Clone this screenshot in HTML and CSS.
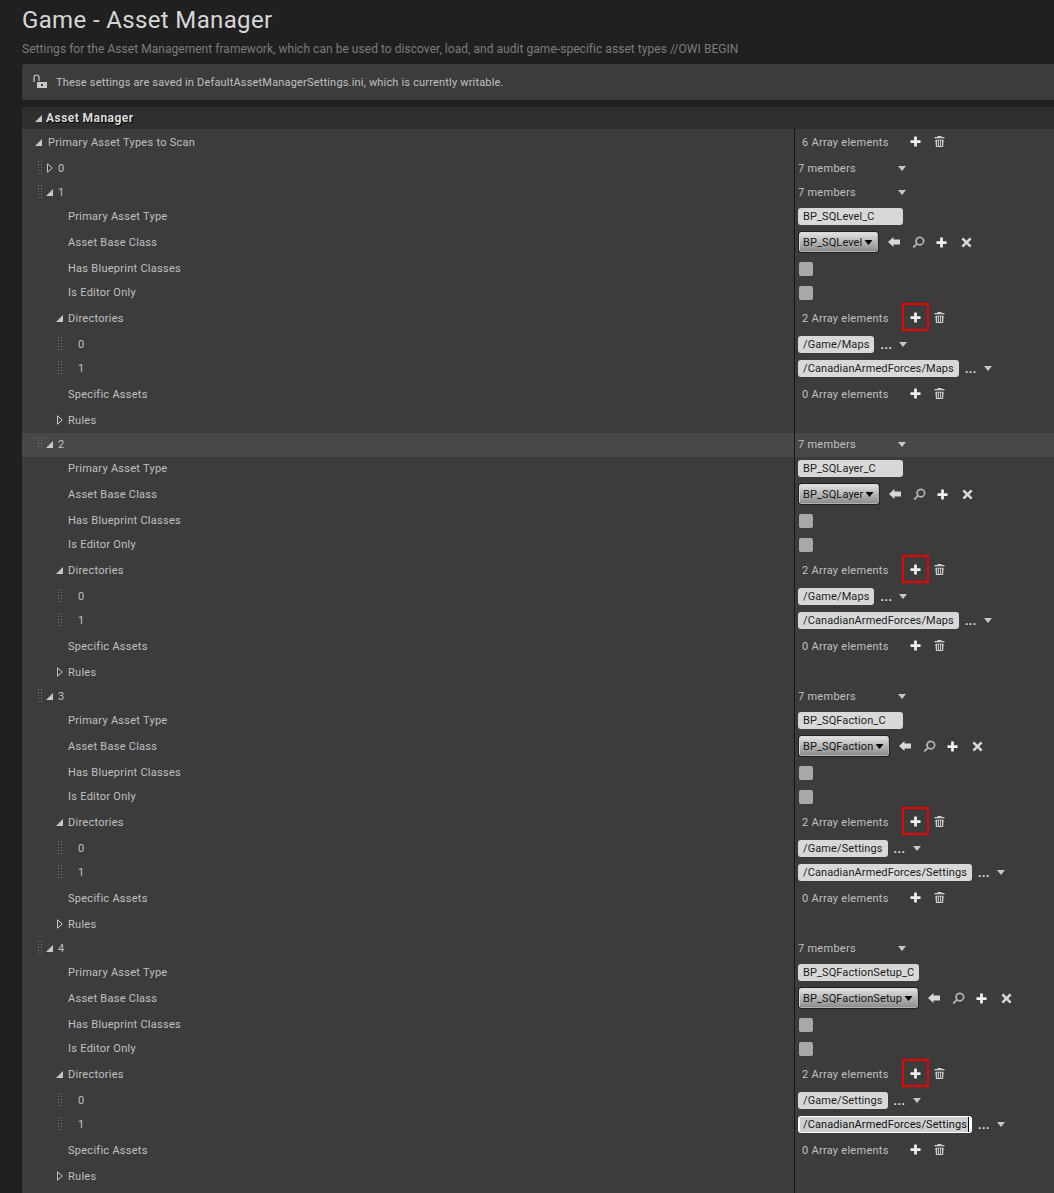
FILE: index.html
```html
<!DOCTYPE html>
<html lang="en">
<head>
    <meta charset="UTF-8">
    <title>Game - Asset Manager</title>
    <link rel="stylesheet" href="styles.css">
</head>
<body>
    <svg class="defs" width="0" height="0">
        <symbol id="plus" viewBox="0 0 12 12"><path d="M4.5 0.5h3v4h4v3h-4v4h-3v-4h-4v-3h4z"/></symbol>
        <symbol id="trash" viewBox="0 0 12 13"><path d="M4 0.5h4l0.5 1H11.5v1.5H0.5V1.5H3.5zM1.5 4.5h9l-0.6 8H2.1zM3.4 5.5v6h1.1v-6zM5.5 5.5v6h1.1v-6zM7.6 5.5v6h1.1v-6z" fill-rule="evenodd"/></symbol>
        <symbol id="back" viewBox="0 0 12 12"><path d="M0 6L5.5 1V3.5H12V8.5H5.5V11z"/></symbol>
        <symbol id="search" viewBox="0 0 12 12"><path d="M7.3 0.5a4.2 4.2 0 1 1-2.6 7.5L1.8 11.2 0.6 10 3.6 6.9A4.2 4.2 0 0 1 7.3 0.5zM7.3 2a2.700 2.700 0 1 0 0 5.400 2.700 2.700 0 0 0 0-5.400z" fill-rule="evenodd"/></symbol>
        <symbol id="cross" viewBox="0 0 12 12"><path d="M2.5 0.5L6 4l3.500-3.500 2 2L8 6l3.500 3.500-2 2L6 8l-3.500 3.500-2-2L4 6 0.500 2.500z"/></symbol>
        <symbol id="caret" viewBox="0 0 8 5"><path d="M0 0h8L4 5z"/></symbol>
        <symbol id="open" viewBox="0 0 7 7"><path d="M7 0V7H0z"/></symbol>
        <symbol id="closed" viewBox="0 0 6 10"><path d="M0.500 0.800L5.300 5 0.500 9.200z" fill="none" stroke="currentColor"/></symbol>
        <symbol id="lock" viewBox="0 0 14 16"><path d="M1 8V3.500a2.500 2.500 0 0 1 5 0V7" fill="none" stroke="currentColor" stroke-width="1.200"/><path d="M4 8h10v6H4z"/><path d="M8 10h2v2H8z" fill="#3c3c3c"/></symbol>
    </svg>

    <div class="page">
        <h1 class="title">Game - Asset Manager</h1>
        <p class="subtitle">Settings for the Asset Management framework, which can be used to discover, load, and audit game-specific asset types //OWI BEGIN</p>

        <div class="notice">
            <svg class="lock-icon"><use href="#lock"/></svg>
            <span>These settings are saved in DefaultAssetManagerSettings.ini, which is currently writable.</span>
        </div>

        <div class="section-header">
            <svg class="tri tri-head"><use href="#open"/></svg>
            <span>Asset Manager</span>
        </div>

        <div class="table">
            <div class="row row-tall">
                <div class="name"><svg class="tri tri-top"><use href="#open"/></svg>Primary Asset Types to Scan</div>
                <div class="value"><span class="count">6 Array elements</span><span class="icon-btn"><svg class="ico"><use href="#plus"/></svg></span><svg class="ico-trash"><use href="#trash"/></svg></div>
            </div>
            <div class="row">
                <div class="name lvl1"><span class="grip"></span><svg class="tri-closed"><use href="#closed"/></svg>0</div>
                <div class="value"><span class="members">7 members</span><svg class="caret"><use href="#caret"/></svg></div>
            </div>

            <!-- 1 -->
            <div class="row">
                <div class="name lvl1"><span class="grip"></span><svg class="tri"><use href="#open"/></svg>1</div>
                <div class="value"><span class="members">7 members</span><svg class="caret"><use href="#caret"/></svg></div>
            </div>
            <div class="row">
                <div class="name lvl2">Primary Asset Type</div>
                <div class="value"><span class="field field-type">BP_SQLevel_C</span></div>
            </div>
            <div class="row row-tall">
                <div class="name lvl2">Asset Base Class</div>
                <div class="value"><span class="combo">BP_SQLevel<svg class="combo-caret"><use href="#caret"/></svg></span><svg class="ico-back"><use href="#back"/></svg><svg class="ico-search"><use href="#search"/></svg><svg class="ico-plus"><use href="#plus"/></svg><svg class="ico-cross"><use href="#cross"/></svg></div>
            </div>
            <div class="row">
                <div class="name lvl2">Has Blueprint Classes</div>
                <div class="value"><span class="check"></span></div>
            </div>
            <div class="row">
                <div class="name lvl2">Is Editor Only</div>
                <div class="value"><span class="check"></span></div>
            </div>
            <div class="row row-tall">
                <div class="name lvl2"><svg class="tri tri-in"><use href="#open"/></svg>Directories</div>
                <div class="value"><span class="count">2 Array elements</span><span class="icon-btn marked"><svg class="ico"><use href="#plus"/></svg></span><svg class="ico-trash"><use href="#trash"/></svg></div>
            </div>
            <div class="row">
                <div class="name lvl3"><span class="grip"></span>0</div>
                <div class="value"><span class="field">/Game/Maps</span><span class="dots">...</span><svg class="caret caret-path"><use href="#caret"/></svg></div>
            </div>
            <div class="row">
                <div class="name lvl3"><span class="grip"></span>1</div>
                <div class="value"><span class="field">/CanadianArmedForces/Maps</span><span class="dots">...</span><svg class="caret caret-path"><use href="#caret"/></svg></div>
            </div>
            <div class="row row-tall">
                <div class="name lvl2">Specific Assets</div>
                <div class="value"><span class="count">0 Array elements</span><span class="icon-btn"><svg class="ico"><use href="#plus"/></svg></span><svg class="ico-trash"><use href="#trash"/></svg></div>
            </div>
            <div class="row">
                <div class="name lvl2"><svg class="tri-closed tri-in"><use href="#closed"/></svg>Rules</div>
                <div class="value"></div>
            </div>

            <!-- 2 -->
            <div class="row row-hover">
                <div class="name lvl1"><span class="grip"></span><svg class="tri"><use href="#open"/></svg>2</div>
                <div class="value"><span class="members">7 members</span><svg class="caret"><use href="#caret"/></svg></div>
            </div>
            <div class="row">
                <div class="name lvl2">Primary Asset Type</div>
                <div class="value"><span class="field field-type">BP_SQLayer_C</span></div>
            </div>
            <div class="row row-tall">
                <div class="name lvl2">Asset Base Class</div>
                <div class="value"><span class="combo">BP_SQLayer<svg class="combo-caret"><use href="#caret"/></svg></span><svg class="ico-back"><use href="#back"/></svg><svg class="ico-search"><use href="#search"/></svg><svg class="ico-plus"><use href="#plus"/></svg><svg class="ico-cross"><use href="#cross"/></svg></div>
            </div>
            <div class="row">
                <div class="name lvl2">Has Blueprint Classes</div>
                <div class="value"><span class="check"></span></div>
            </div>
            <div class="row">
                <div class="name lvl2">Is Editor Only</div>
                <div class="value"><span class="check"></span></div>
            </div>
            <div class="row row-tall">
                <div class="name lvl2"><svg class="tri tri-in"><use href="#open"/></svg>Directories</div>
                <div class="value"><span class="count">2 Array elements</span><span class="icon-btn marked"><svg class="ico"><use href="#plus"/></svg></span><svg class="ico-trash"><use href="#trash"/></svg></div>
            </div>
            <div class="row">
                <div class="name lvl3"><span class="grip"></span>0</div>
                <div class="value"><span class="field">/Game/Maps</span><span class="dots">...</span><svg class="caret caret-path"><use href="#caret"/></svg></div>
            </div>
            <div class="row">
                <div class="name lvl3"><span class="grip"></span>1</div>
                <div class="value"><span class="field">/CanadianArmedForces/Maps</span><span class="dots">...</span><svg class="caret caret-path"><use href="#caret"/></svg></div>
            </div>
            <div class="row row-tall">
                <div class="name lvl2">Specific Assets</div>
                <div class="value"><span class="count">0 Array elements</span><span class="icon-btn"><svg class="ico"><use href="#plus"/></svg></span><svg class="ico-trash"><use href="#trash"/></svg></div>
            </div>
            <div class="row">
                <div class="name lvl2"><svg class="tri-closed tri-in"><use href="#closed"/></svg>Rules</div>
                <div class="value"></div>
            </div>

            <!-- 3 -->
            <div class="row">
                <div class="name lvl1"><span class="grip"></span><svg class="tri"><use href="#open"/></svg>3</div>
                <div class="value"><span class="members">7 members</span><svg class="caret"><use href="#caret"/></svg></div>
            </div>
            <div class="row">
                <div class="name lvl2">Primary Asset Type</div>
                <div class="value"><span class="field field-type">BP_SQFaction_C</span></div>
            </div>
            <div class="row row-tall">
                <div class="name lvl2">Asset Base Class</div>
                <div class="value"><span class="combo">BP_SQFaction<svg class="combo-caret"><use href="#caret"/></svg></span><svg class="ico-back"><use href="#back"/></svg><svg class="ico-search"><use href="#search"/></svg><svg class="ico-plus"><use href="#plus"/></svg><svg class="ico-cross"><use href="#cross"/></svg></div>
            </div>
            <div class="row">
                <div class="name lvl2">Has Blueprint Classes</div>
                <div class="value"><span class="check"></span></div>
            </div>
            <div class="row">
                <div class="name lvl2">Is Editor Only</div>
                <div class="value"><span class="check"></span></div>
            </div>
            <div class="row row-tall">
                <div class="name lvl2"><svg class="tri tri-in"><use href="#open"/></svg>Directories</div>
                <div class="value"><span class="count">2 Array elements</span><span class="icon-btn marked"><svg class="ico"><use href="#plus"/></svg></span><svg class="ico-trash"><use href="#trash"/></svg></div>
            </div>
            <div class="row">
                <div class="name lvl3"><span class="grip"></span>0</div>
                <div class="value"><span class="field">/Game/Settings</span><span class="dots">...</span><svg class="caret caret-path"><use href="#caret"/></svg></div>
            </div>
            <div class="row">
                <div class="name lvl3"><span class="grip"></span>1</div>
                <div class="value"><span class="field">/CanadianArmedForces/Settings</span><span class="dots">...</span><svg class="caret caret-path"><use href="#caret"/></svg></div>
            </div>
            <div class="row row-tall">
                <div class="name lvl2">Specific Assets</div>
                <div class="value"><span class="count">0 Array elements</span><span class="icon-btn"><svg class="ico"><use href="#plus"/></svg></span><svg class="ico-trash"><use href="#trash"/></svg></div>
            </div>
            <div class="row">
                <div class="name lvl2"><svg class="tri-closed tri-in"><use href="#closed"/></svg>Rules</div>
                <div class="value"></div>
            </div>

            <!-- 4 -->
            <div class="row">
                <div class="name lvl1"><span class="grip"></span><svg class="tri"><use href="#open"/></svg>4</div>
                <div class="value"><span class="members">7 members</span><svg class="caret"><use href="#caret"/></svg></div>
            </div>
            <div class="row">
                <div class="name lvl2">Primary Asset Type</div>
                <div class="value"><span class="field field-wide">BP_SQFactionSetup_C</span></div>
            </div>
            <div class="row row-tall">
                <div class="name lvl2">Asset Base Class</div>
                <div class="value"><span class="combo">BP_SQFactionSetup<svg class="combo-caret"><use href="#caret"/></svg></span><svg class="ico-back"><use href="#back"/></svg><svg class="ico-search"><use href="#search"/></svg><svg class="ico-plus"><use href="#plus"/></svg><svg class="ico-cross"><use href="#cross"/></svg></div>
            </div>
            <div class="row">
                <div class="name lvl2">Has Blueprint Classes</div>
                <div class="value"><span class="check"></span></div>
            </div>
            <div class="row">
                <div class="name lvl2">Is Editor Only</div>
                <div class="value"><span class="check"></span></div>
            </div>
            <div class="row row-tall">
                <div class="name lvl2"><svg class="tri tri-in"><use href="#open"/></svg>Directories</div>
                <div class="value"><span class="count">2 Array elements</span><span class="icon-btn marked"><svg class="ico"><use href="#plus"/></svg></span><svg class="ico-trash"><use href="#trash"/></svg></div>
            </div>
            <div class="row">
                <div class="name lvl3"><span class="grip"></span>0</div>
                <div class="value"><span class="field">/Game/Settings</span><span class="dots">...</span><svg class="caret caret-path"><use href="#caret"/></svg></div>
            </div>
            <div class="row">
                <div class="name lvl3"><span class="grip"></span>1</div>
                <div class="value"><span class="field field-focus"><span class="selected">/CanadianArmedForces/Settings</span></span><span class="dots">...</span><svg class="caret caret-path"><use href="#caret"/></svg></div>
            </div>
            <div class="row row-tall">
                <div class="name lvl2">Specific Assets</div>
                <div class="value"><span class="count">0 Array elements</span><span class="icon-btn"><svg class="ico"><use href="#plus"/></svg></span><svg class="ico-trash"><use href="#trash"/></svg></div>
            </div>
            <div class="row">
                <div class="name lvl2"><svg class="tri-closed tri-in"><use href="#closed"/></svg>Rules</div>
                <div class="value"></div>
            </div>
            <div class="row">
                <div class="name"></div>
                <div class="value"></div>
            </div>
        </div>
    </div>
</body>
</html>
```

FILE: styles.css
```css
html, body {
    height: 100%;
    overflow: hidden;
}
body {
    margin: 0;
    background: #202020;
    color: #c0c0c0;
    font-family: Roboto, "Liberation Sans", sans-serif;
    font-size: 11px;
    letter-spacing: 0.27px;
}
.defs {
    display: block;
    height: 0;
}
.page {
    padding-left: 22px;
}
.title {
    margin: 0;
    padding-top: 5px;
    height: 33px;
    box-sizing: content-box;
    font-size: 24px;
    line-height: 31px;
    font-weight: 400;
    letter-spacing: 0.36px;
    color: #d6d6d6;
}
.subtitle {
    margin: 0;
    height: 26px;
    font-size: 12px;
    line-height: 22px;
    letter-spacing: 0.04px;
    color: #7c7c7c;
    white-space: nowrap;
    padding-top: 0;
}
.notice {
    display: flex;
    align-items: center;
    height: 36px;
    background: #3c3c3c;
    border-radius: 3px 0 0 3px;
    color: #c0c0c0;
    letter-spacing: 0.18px;
    padding-left: 11px;
}
.lock-icon {
    width: 14px;
    height: 16px;
    margin-right: 9px;
    fill: #c8c8c8;
    color: #c8c8c8;
}
.section-header {
    display: flex;
    align-items: center;
    height: 22px;
    margin-top: 7px;
    background: #2f2f2f;
    border-radius: 3px 0 0 0;
    padding-left: 13px;
    font-size: 12px;
    font-weight: 700;
    letter-spacing: 0.45px;
    color: #dcdcdc;
    text-shadow: 1px 1px 1px #000;
}
.table {
    background: #3c3c3c;
}
.row {
    display: flex;
    height: 24px;
}
.row-tall {
    height: 28px;
}
.row-hover {
    background: #484848;
}
.name {
    display: flex;
    align-items: center;
    box-sizing: border-box;
    width: 772px;
    padding-bottom: 2px;
    white-space: nowrap;
}
.row-tall > .name {
    padding-left: 13px;
    padding-bottom: 2px;
}
.name.lvl1 {
    padding-left: 16px;
}
.name.lvl2 {
    padding-left: 46px;
}
.name.lvl3 {
    padding-left: 36px;
}
.value {
    display: flex;
    align-items: center;
    flex: 1;
    box-sizing: border-box;
    border-left: 1px solid #161616;
    padding-left: 3px;
    padding-bottom: 1px;
}
.row-tall > .value {
    padding-bottom: 2px;
}
.tri {
    width: 7px;
    height: 7px;
    flex: none;
    margin-left: 3px;
    margin-right: 5px;
    fill: #c8c8c8;
}
.tri-head {
    margin-left: 0;
    margin-right: 4px;
}
.tri-top {
    margin-left: 0;
    margin-right: 6px;
}
.name .tri.tri-in {
    margin-left: -12px;
    margin-right: 5px;
}
.tri-closed {
    width: 6px;
    height: 10px;
    flex: none;
    margin-left: 4px;
    margin-right: 5px;
    color: #c8c8c8;
    fill: none;
}
.name .tri-closed.tri-in {
    margin-left: -11px;
}
.grip {
    width: 5px;
    height: 14px;
    flex: none;
    background-image: radial-gradient(circle at 0.5px 0.5px, #777 0.6px, transparent 0.7px);
    background-size: 3px 3px;
}
.lvl3 .grip {
    margin-right: 15px;
}
.count {
    width: 104px;
    flex: none;
    padding-left: 4px;
    box-sizing: border-box;
}
.members {
    width: 100px;
    flex: none;
}
.caret {
    width: 8px;
    height: 5px;
    fill: #c8c8c8;
}
.caret-path {
    margin-left: 8px;
}
.icon-btn {
    display: flex;
    align-items: center;
    justify-content: center;
    box-sizing: border-box;
    width: 27px;
    height: 28px;
    flex: none;
    margin-right: 5px;
    margin-bottom: 2px;
}
.icon-btn.marked {
    border: 2px solid #f00000;
}
.ico {
    width: 11px;
    height: 11px;
    fill: #f0f0f0;
}
.ico-trash {
    width: 11px;
    height: 13px;
    margin-bottom: 2px;
    fill: #cfcfcf;
}
.field {
    display: block;
    box-sizing: border-box;
    height: 17px;
    padding: 0 5px;
    background: #d8d8d8;
    border-radius: 3px;
    color: #1c1c1c;
    letter-spacing: 0.1px;
    line-height: 17px;
    white-space: nowrap;
}
.field-type {
    width: 105px;
}
.field-wide {
    width: 121px;
}
.field-focus {
    background: #fff;
    color: #111;
    padding: 1px 3px 1px 2px;
    line-height: 15px;
}
.selected {
    display: block;
    height: 15px;
    padding-left: 3px;
    padding-right: 1px;
    background: #cfcfcf;
    border-right: 1px solid #000;
}
.dots {
    width: 11px;
    margin-left: 6px;
    margin-top: 2px;
    font-weight: 700;
    font-size: 12px;
    letter-spacing: 0.5px;
    line-height: 13px;
    color: #e0e0e0;
}
.combo {
    display: flex;
    align-items: center;
    box-sizing: border-box;
    height: 20px;
    margin-left: 1px;
    padding-left: 3px;
    padding-right: 4px;
    background: linear-gradient(#e0e0e0, #8c8c8c);
    border: 1px solid #d8d8d8;
    border-right-color: #b0b0b0;
    border-bottom-color: #b0b0b0;
    outline: 1px solid #222;
    border-radius: 2px;
    color: #141414;
    letter-spacing: 0.1px;
    white-space: nowrap;
}
.combo-caret {
    width: 9px;
    height: 5px;
    margin-left: 2px;
    fill: #000;
}
.ico-back {
    width: 12px;
    height: 12px;
    margin-left: 10px;
    fill: #d8d8d8;
}
.ico-search {
    width: 13px;
    height: 13px;
    margin-left: 12px;
    fill: #b4b4b4;
}
.ico-plus {
    width: 11px;
    height: 11px;
    margin-left: 11px;
    fill: #f0f0f0;
}
.ico-cross {
    width: 11px;
    height: 11px;
    margin-left: 14px;
    fill: #d8d8d8;
}
.check {
    display: block;
    width: 14px;
    height: 14px;
    margin-left: 1px;
    background: #a8a8a8;
    border-radius: 2px;
}
```
